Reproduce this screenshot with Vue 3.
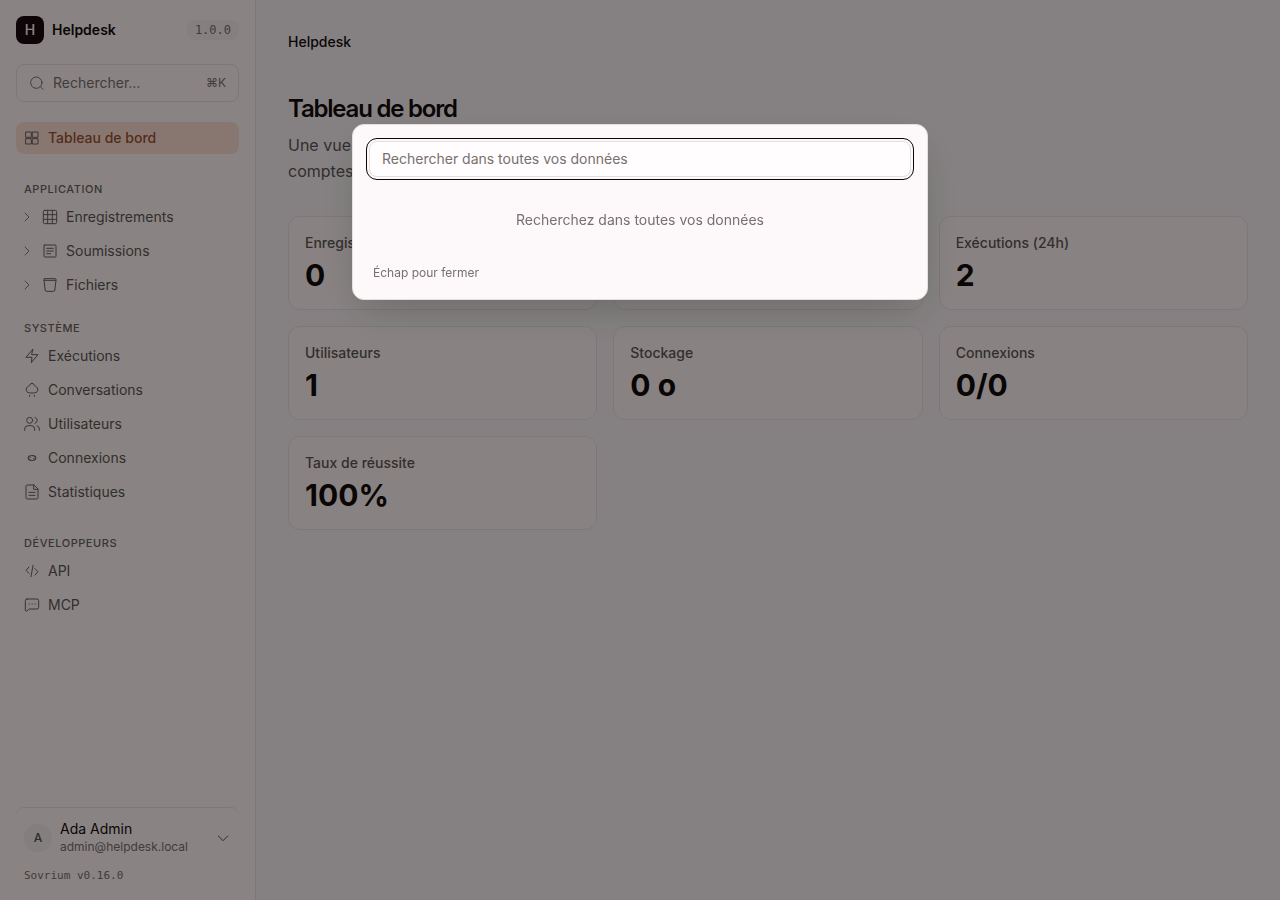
<template>
  <div class="layout">
    <aside class="sidebar">
      <div class="brand">
        <span class="logo">H</span>
        <span class="brand-name">Helpdesk</span>
        <span class="version">1.0.0</span>
      </div>

      <button type="button" class="search-button" @click="searchOpen = true">
        <svg class="icon" viewBox="0 0 24 24"><circle cx="11" cy="11.500" r="8.500" /><path d="M17.500 18 21 21.500" /></svg>
        <span>Rechercher…</span>
        <kbd>⌘K</kbd>
      </button>

      <nav class="nav">
        <a href="#" class="nav-item active">
          <svg class="icon" viewBox="0 0 24 24"><path :d="icons.dashboard" /></svg>
          Tableau de bord
        </a>

        <section v-for="group in groups" :key="group.title" class="nav-group" :class="{ tight: group.tight }">
          <h2>{{ group.title }}</h2>
          <a v-for="item in group.items" :key="item.label" href="#" class="nav-item">
            <svg v-if="group.expandable" class="icon chevron" viewBox="0 0 10 16"><path d="m1 4 4 4-4 4" /></svg>
            <svg class="icon" viewBox="0 0 24 24"><path :d="icons[item.icon]" /></svg>
            {{ item.label }}
          </a>
        </section>
      </nav>

      <footer class="sidebar-footer">
        <button type="button" class="account">
          <span class="avatar">A</span>
          <span class="account-text">
            <span class="account-name">Ada Admin</span>
            <span class="account-email">admin@helpdesk.local</span>
          </span>
          <svg class="icon" viewBox="0 0 24 24"><path d="m5 9 7 7 7-7" /></svg>
        </button>
        <p class="build">Sovrium v0.16.0</p>
      </footer>
    </aside>

    <main class="content">
      <p class="app-title">Helpdesk</p>
      <h1>Tableau de bord</h1>
      <p class="description">
        Une vue d’ensemble de vos enregistrements, soumissions, fichiers et comptes.
      </p>

      <div class="cards">
        <div v-for="stat in stats" :key="stat.label" class="card">
          <p class="card-label">{{ stat.label }}</p>
          <p class="card-value">{{ stat.value }}</p>
        </div>
      </div>
    </main>

    <div v-if="searchOpen" class="backdrop" @click.self="searchOpen = false" @keydown.esc="searchOpen = false">
      <div class="dialog" role="dialog" aria-modal="true" aria-label="Recherche">
        <input
          v-model="query"
          type="text"
          class="search-field"
          aria-label="Rechercher dans toutes vos données"
          placeholder="Rechercher dans toutes vos données"
        />
        <p class="empty">Recherchez dans toutes vos données</p>
        <p class="hint">Échap pour fermer</p>
      </div>
    </div>
  </div>
</template>

<script setup>
import { ref } from 'vue';

const searchOpen = ref(true);
const query = ref('');

const icons = {
  dashboard: 'M3 3h8v8H3zM13 3h8v8h-8zM3 13h8v8H3zM13 13h8v8h-8z',
  table: 'M4 2h16a2 2 0 0 1 2 2v16a2 2 0 0 1-2 2H4a2 2 0 0 1-2-2V4a2 2 0 0 1 2-2zM2 8.500h20M2 15.500h20M8.500 2v20M15.500 2v20',
  form: 'M4 3h16a1 1 0 0 1 1 1v16a1 1 0 0 1-1 1H4a1 1 0 0 1-1-1V4a1 1 0 0 1 1-1zM7 8h10M7 12h10M7 16h6',
  bucket: 'M4 2.500h16a1 1 0 0 1 1 1V5H3V3.500a1 1 0 0 1 1-1zM3 5l1.800 14.500a2 2 0 0 0 2 2h10.400a2 2 0 0 0 2-2L21 5',
  bolt: 'M13 2 3 14h9l-1 8 10-12h-9z',
  cloud: 'M9 16.500a5.200 5.200 0 0 1-2.500-10c1.200-.6 2-.8 2.300-2a3.300 3.300 0 0 1 6.400 0c.3 1.200 1.100 1.400 2.300 2a5.200 5.200 0 0 1-2.500 10zM8.500 20v1.500M15.500 20v1.500',
  users: 'M16 21.500v-2a5 5 0 0 0-5-5H6a5 5 0 0 0-5 5v2M13 6.500a4.500 4.500 0 1 1-9 0 4.500 4.500 0 0 1 9 0zM23 21.500v-2a5 5 0 0 0-3.500-4.800M16.500 2.200a4.500 4.500 0 0 1 0 8.700',
  link: 'M11 15.500H9.500a3.500 3.500 0 0 1 0-7H14a3 3 0 0 1 1.500 5.500L14 13M13 8.500h1.500a3.500 3.500 0 0 1 0 7H10A3 3 0 0 1 8.500 10l1.500 1',
  file: 'M14.500 1.500H5a2 2 0 0 0-2 2v17a2 2 0 0 0 2 2h14a2 2 0 0 0 2-2V8zM14.500 1.500V8H21M7.500 12.500h9M7.500 17h9',
  code: 'm7.500 6-4.500 5 4.500 4.500M16.500 8.500 21 13l-4.500 5M13.500 3.500l-3 17',
  chat: 'M4.500 3h15A2.500 2.500 0 0 1 22 5.500v10a2.500 2.500 0 0 1-2.500 2.500H8l-4 3c-1 .6-2 0-2-1V5.500A2.500 2.500 0 0 1 4.500 3zM7.500 10.500h.5M12 10.500h.5M16.500 10.500h.5'
};

const groups = [
  {
    title: 'Application',
    expandable: true,
    items: [
      { label: 'Enregistrements', icon: 'table' },
      { label: 'Soumissions', icon: 'form' },
      { label: 'Fichiers', icon: 'bucket' }
    ]
  },
  {
    title: 'Système',
    tight: true,
    items: [
      { label: 'Exécutions', icon: 'bolt' },
      { label: 'Conversations', icon: 'cloud' },
      { label: 'Utilisateurs', icon: 'users' },
      { label: 'Connexions', icon: 'link' },
      { label: 'Statistiques', icon: 'file' }
    ]
  },
  {
    title: 'Développeurs',
    items: [
      { label: 'API', icon: 'code' },
      { label: 'MCP', icon: 'chat' }
    ]
  }
];

const stats = [
  { label: 'Enregistrements', value: '0' },
  { label: 'Soumissions', value: '0' },
  { label: 'Exécutions (24h)', value: '2' },
  { label: 'Utilisateurs', value: '1' },
  { label: 'Stockage', value: '0 o' },
  { label: 'Connexions', value: '0/0' },
  { label: 'Taux de réussite', value: '100%' }
];
</script>

<style>
body {
  margin: 0;
}
</style>

<style scoped>
.layout {
  display: flex;
  min-height: 100vh;
  background: #f5eff0;
  color: #140c0c;
  font-family: Inter, sans-serif;
  font-size: 14px;
  line-height: 20px;
}

.layout *,
.layout *::before {
  box-sizing: border-box;
}

h1,
h2,
p {
  margin: 0;
}

button {
  font: inherit;
  text-align: left;
  cursor: pointer;
}

.icon {
  flex: none;
  width: 16px;
  height: 16px;
  fill: none;
  stroke: currentColor;
  stroke-width: 1.5;
  stroke-linecap: round;
  stroke-linejoin: round;
}

.sidebar {
  position: sticky;
  top: 0;
  display: flex;
  flex: none;
  flex-direction: column;
  width: 256px;
  height: 100vh;
  padding: 16px;
  border-right: 1px solid #e6dedd;
  background: #fdf4f3;
}

.brand {
  display: flex;
  align-items: center;
  gap: 8px;
}

.logo {
  display: grid;
  place-items: center;
  width: 28px;
  height: 28px;
  border-radius: 8px;
  background: #180b0e;
  color: #fdf4f3;
  font-weight: 500;
}

.brand-name {
  font-weight: 600;
}

.version {
  margin-left: auto;
  padding: 0 8px;
  border-radius: 8px;
  background: #f5eceb;
  color: #78706e;
  font-family: "DejaVu Sans Mono", monospace;
  font-size: 12px;
}

.search-button {
  display: flex;
  align-items: center;
  gap: 8px;
  height: 38px;
  margin-top: 20px;
  padding: 0 12px;
  border: 1px solid #e6dedd;
  border-radius: 8px;
  background: transparent;
  color: #78706e;
}

.search-button kbd {
  margin-left: auto;
  font-family: Inter, sans-serif;
  font-size: 12px;
}

.nav {
  margin-top: 20px;
}

.nav-item {
  display: flex;
  align-items: center;
  gap: 8px;
  height: 32px;
  padding: 0 8px;
  border-radius: 8px;
  color: #5e5654;
  text-decoration: none;
}

.nav-item .icon {
  color: #6a6260;
}

.nav-item + .nav-item {
  margin-top: 2px;
}

.nav-item.active {
  background: #fbddd1;
  color: #9a5230;
  font-weight: 500;
}

.nav-item .chevron {
  width: 10px;
  color: #857d7b;
  stroke-width: 1;
}

.nav-group {
  margin-top: 26px;
}

.nav-group.tight {
  margin-top: 18px;
}

.nav-group h2 {
  margin-bottom: 3px;
  padding-left: 8px;
  color: #6a6260;
  font-size: 11px;
  font-weight: 500;
  line-height: 18px;
  letter-spacing: 0.05em;
  text-transform: uppercase;
}

.sidebar-footer {
  margin-top: auto;
}

.account {
  display: flex;
  align-items: center;
  gap: 8px;
  width: 100%;
  padding: 12px 8px;
  border: 0;
  border-top: 1px solid #e6dedd;
  border-radius: 8px;
  background: transparent;
  color: #140c0c;
}

.account .icon {
  color: #57504e;
}

.avatar {
  display: grid;
  place-items: center;
  width: 28px;
  height: 28px;
  border-radius: 50%;
  background: #f3eae9;
  color: #57504e;
  font-size: 12px;
  font-weight: 500;
}

.account-text {
  display: flex;
  flex: 1;
  flex-direction: column;
}

.account-name {
  line-height: 18px;
}

.account-email {
  color: #78706e;
  font-size: 12px;
  line-height: 18px;
}

.build {
  padding-left: 8px;
  color: #78706e;
  font-family: "DejaVu Sans Mono", monospace;
  font-size: 11px;
  line-height: 16px;
}

.content {
  flex: 1;
  min-width: 0;
  padding: 32px;
}

.app-title {
  font-weight: 500;
}

h1 {
  margin-top: 41px;
  font-size: 24px;
  font-weight: 600;
  line-height: 32px;
  letter-spacing: -0.05em;
}

.description {
  max-width: 540px;
  margin-top: 7px;
  color: #5e5654;
  font-size: 16px;
  line-height: 26px;
}

.cards {
  display: grid;
  grid-template-columns: repeat(3, 1fr);
  gap: 16px;
  margin-top: 32px;
}

.card {
  padding: 16px;
  border: 1px solid #e6dedd;
  border-radius: 12px;
  background: #fbf2f1;
}

.card-label {
  color: #5e5654;
  font-weight: 500;
}

.card-value {
  margin-top: 4px;
  font-size: 30px;
  font-weight: 700;
  line-height: 36px;
}

.backdrop {
  position: fixed;
  inset: 0;
  display: flex;
  align-items: flex-start;
  justify-content: center;
  padding: 124px 16px 16px;
  background: rgba(0, 0, 0, 0.46);
}

.dialog {
  width: 100%;
  max-width: 576px;
  padding: 16px;
  border: 1px solid #e6dedd;
  border-radius: 12px;
  background: #fdf9fa;
  box-shadow: 0 16px 40px -8px rgba(0, 0, 0, 0.2);
}

.search-field {
  display: block;
  width: 100%;
  height: 36px;
  padding: 0 12px 2px;
  border: 1px solid #e6dedd;
  border-radius: 8px;
  outline: 1px solid #0c0809;
  outline-offset: 2px;
  background: #fffdfd;
  color: #0c0809;
  font: inherit;
}

.search-field::placeholder {
  color: #78706e;
}

.empty {
  padding: 32px 0;
  color: #78706e;
  line-height: 22px;
  text-align: center;
}

.hint {
  padding-left: 4px;
  color: #78706e;
  font-size: 12px;
}
</style>
